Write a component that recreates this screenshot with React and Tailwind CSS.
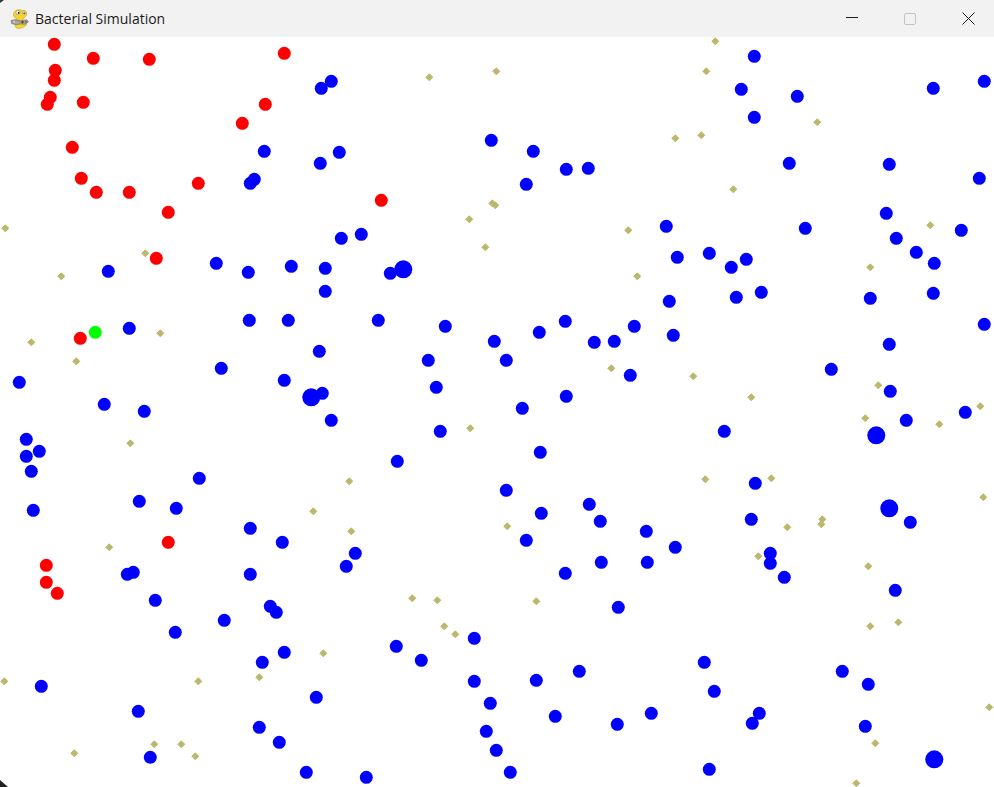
import React from 'react';

const RED = [[54,44],[93,58],[149,59],[284,53],[55,70],[54,80],[50,97],[47,104],[83,102],[265,104],[242,123],[72,147],[81,178],[96,192],[129,192],[198,183],[168,212],[381,200],[156,258],[80,338],[168,542],[46,565],[46,582],[57,593]];

const BLUE = [[754,56],[331,81],[321,88],[741,89],[797,96],[933,88],[984,81],[754,117],[264,151],[339,152],[320,163],[491,140],[533,151],[566,169],[588,168],[789,163],[889,164],[979,178],[254,179],[250,183],[526,184],[886,213],[666,226],[805,228],[961,230],[341,238],[361,234],[896,238],[916,252],[934,263],[677,257],[709,253],[731,267],[746,259],[216,263],[248,272],[291,266],[325,268],[108,271],[390,273],[325,291],[669,301],[736,297],[761,292],[870,298],[933,293],[249,320],[288,320],[378,320],[445,326],[565,321],[634,326],[129,328],[539,332],[673,335],[494,341],[594,342],[614,341],[889,344],[984,324],[319,351],[428,360],[506,360],[221,368],[284,380],[630,375],[831,369],[19,382],[436,387],[322,393],[890,391],[566,396],[104,404],[144,411],[522,408],[331,420],[906,420],[965,412],[440,431],[724,431],[26,439],[39,451],[26,456],[540,452],[397,461],[31,471],[199,478],[755,483],[506,490],[139,501],[589,504],[33,510],[176,508],[541,513],[600,521],[751,519],[910,522],[250,528],[646,531],[282,542],[526,540],[675,547],[355,553],[770,553],[601,562],[647,562],[770,563],[346,566],[133,572],[127,574],[250,574],[565,573],[784,577],[155,600],[895,590],[270,606],[276,612],[618,607],[224,620],[175,632],[474,638],[284,652],[396,646],[421,660],[262,662],[704,662],[579,671],[842,671],[474,681],[536,680],[41,686],[868,684],[714,691],[316,697],[490,703],[138,711],[555,716],[651,713],[759,713],[617,724],[752,723],[865,726],[259,727],[486,731],[279,742],[496,750],[150,757],[306,772],[366,777],[510,772],[709,769]];

const BIG_BLUE = [[403,269],[311,397],[876,435],[889,508],[934,759]];

const FOOD = [[715,41],[429,77],[496,71],[706,71],[817,122],[675,138],[701,135],[733,189],[5,228],[492,203],[495,205],[469,219],[628,230],[930,225],[485,247],[145,253],[870,267],[61,276],[637,276],[160,333],[31,342],[76,361],[611,368],[693,376],[878,385],[751,397],[865,418],[980,406],[939,424],[470,428],[130,443],[349,481],[705,479],[771,478],[983,497],[313,511],[351,531],[507,526],[787,527],[822,519],[821,524],[109,547],[758,556],[868,566],[412,598],[437,600],[536,601],[444,626],[455,634],[870,626],[898,622],[323,653],[4,681],[198,681],[259,677],[989,707],[74,753],[154,744],[181,744],[195,756],[875,743],[856,783]];

const TITLE_H = 37;

// pygame snake: yellow head on top, grey pad across the middle, yellow coil below
const SnakeIcon = () => (
  <svg width="20" height="20" viewBox="0 0 20 20" className="shrink-0">
    <path d="M5 17 Q5 12 9 11 L15 11 Q18 13 16 16.5 Q13 19.5 8 19.5 Q5.5 19 5 17 Z" fill="#f6d32d" stroke="#b89c20" strokeWidth="0.5" />
    <path d="M7 1 Q10 0 12 1.5 Q15 0.5 16.5 3 Q17.5 6 15 8 Q13 9.5 12 11.5 L7 11.5 Q7.5 9.5 5.5 9 Q3 8 3.5 4.5 Q4.5 1.5 7 1 Z" fill="#f6d32d" stroke="#b89c20" strokeWidth="0.5" />
    <ellipse cx="8" cy="3.6" rx="1.9" ry="2.2" fill="#ffffff" stroke="#6b6b4a" strokeWidth="0.4" />
    <circle cx="8.6" cy="3.9" r="0.9" fill="#111111" />
    <ellipse cx="13.8" cy="4" rx="1.4" ry="1.9" fill="#ffffff" stroke="#6b6b4a" strokeWidth="0.4" />
    <circle cx="14.1" cy="4.2" r="0.8" fill="#111111" />
    <path d="M1 11.5 L6 10.5 L10 12 L17 10.8 L18.5 13 L15 15.2 L10 15 L6 15.8 L1.5 14.5 Z" fill="#a5a59c" stroke="#5a5a52" strokeWidth="0.5" />
    <circle cx="4.2" cy="13" r="1.2" fill="#ececE4" stroke="#555555" strokeWidth="0.3" />
    <circle cx="12.5" cy="13.2" r="1.1" fill="#3a3a3a" />
    <rect x="15" y="12.3" width="1.8" height="1.2" fill="#a83a3a" />
  </svg>
);

const Dots = () => (
  <svg width="994" height="750" viewBox={`0 ${TITLE_H} 994 750`} className="block">
    {FOOD.map(([x, y], i) => (
      <polygon key={i} points={`${x + 0.3},${y - 3.2} ${x + 3.8},${y + 0.3} ${x + 0.3},${y + 3.8} ${x - 3.2},${y + 0.3}`} fill="#bdb76b" stroke="#bdb76b" strokeWidth="1" strokeLinejoin="round" />
    ))}
    {BLUE.map(([x, y], i) => <circle key={i} cx={x + 0.3} cy={y + 0.3} r="6.5" fill="#0000ff" />)}
    {BIG_BLUE.map(([x, y], i) => <circle key={i} cx={x + 0.3} cy={y + 0.3} r="9" fill="#0000ff" />)}
    {RED.map(([x, y], i) => <circle key={i} cx={x + 0.3} cy={y + 0.3} r="6.5" fill="#ff0000" />)}
    <circle cx="95.3" cy="332.3" r="6.5" fill="#00ff00" />
  </svg>
);

const App = () => (
  <div className="relative w-[994px] h-[787px] bg-white overflow-hidden">
    <div className="h-[37px] bg-[#f2f2f2] flex items-center">
      <div className="pl-[10px] pr-[5px] flex items-center">
        <SnakeIcon />
      </div>
      <span className="text-[14px] text-[#1a1a1a] font-['Open_Sans',sans-serif]">Bacterial Simulation</span>
      <div className="ml-auto flex items-center h-full">
        <div className="w-[58px] h-full flex items-center justify-center">
          <div className="w-[12px] h-px bg-[#1a1a1a] -translate-y-px"></div>
        </div>
        <div className="w-[58px] h-full flex items-center justify-center">
          <div className="w-[12px] h-[12px] border border-[#c4c4c4] rounded-[2px]"></div>
        </div>
        <div className="w-[55px] h-full flex items-center pl-[23px]">
          <svg width="13" height="13" viewBox="0 0 13 13" fill="none" stroke="#1a1a1a" strokeWidth="1">
            <path d="M0.5 0.5 L12.5 12.5 M12.5 0.5 L0.5 12.5" />
          </svg>
        </div>
      </div>
    </div>
    <Dots />
    {/* desktop showing through the rounded window corners */}
    <svg width="4" height="3" className="absolute top-0 left-0">
      <path d="M0 0 H4 L0 3 Z" fill="#333333" />
    </svg>
    <svg width="8" height="7" className="absolute bottom-0 left-0">
      <path d="M0 0 L8 7 H0 Z" fill="#222222" />
    </svg>
  </div>
);

export default App;
